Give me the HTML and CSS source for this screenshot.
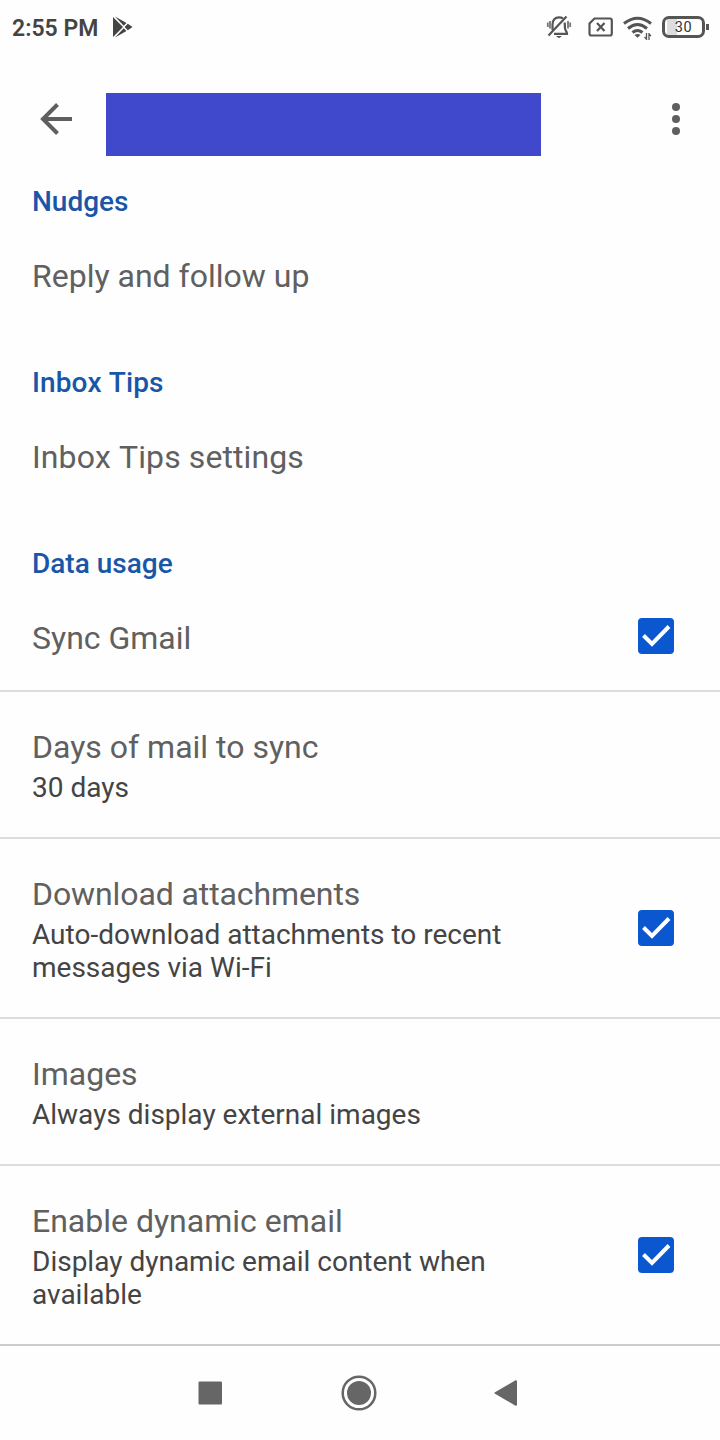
FILE: index.html
```html
<!DOCTYPE html>
<html lang="en">
<head>
    <meta charset="UTF-8">
    <meta name="viewport" content="width=device-width, initial-scale=1.0">
    <title>Settings</title>
    <link rel="stylesheet" href="styles.css">
</head>
<body>
    <div class="status-bar">
        <span class="clock">2:55 PM</span>
        <svg class="play" width="22" height="22" viewBox="0 0 22 22">
            <path d="M1 1L11 11L1 21Z M3 0.5L14.5 7L11.7 9.8Z M3 21.5L14.5 15L11.7 12.2Z M15.8 7.7L20.5 11L15.8 14.3L12.6 11Z" fill="#444"/>
        </svg>
        <div class="status-icons">
            <svg class="bell" width="26" height="26" viewBox="0 0 26 26" fill="none" stroke="#555">
                <path d="M6.500 16V10.500C6.500 6 9 3.300 13 3.300C14.500 3.300 16 3.700 17 4.500M18.500 8.500C19 10 18.800 12 19 14.500C19.200 16.500 21 17.500 21 19.800H8" stroke-width="2.200"/>
                <path d="M2.500 21.500L20.500 2.500" stroke-width="2.200"/>
                <path d="M10 22H16L13 24.200Z" fill="#555" stroke="none"/>
                <path d="M1.800 8.500V13M4 7V14.500M22 7V14.500M24.200 8.500V13" stroke="#777" stroke-width="1.800"/>
            </svg>
            <svg class="sim" width="25" height="20" viewBox="0 0 25 20" fill="none" stroke="#555" stroke-width="2.200">
                <path d="M6.500 1.500H22Q23.800 1.500 23.800 3.500V16.500Q23.800 18.500 22 18.500H3.500Q1.500 18.500 1.500 16.500V6.500Z"/>
                <path d="M9 6L16.500 14M16.500 6L9 14"/>
            </svg>
            <svg class="wifi" width="30" height="24" viewBox="0 0 30 24" fill="none" stroke="#555">
                <path d="M2 7.500Q15.500 -3 29 7.500M6 12.500Q15.500 4.500 25 12.500M10.500 16.500Q15.500 12.500 20.500 16.500" stroke-width="3"/>
                <path d="M12.500 19Q15.500 17 18.500 19L15.500 21.800Z" fill="#555" stroke="none"/>
                <path d="M24.500 17V24M27 17V24M22.500 21L24.500 23M29 20L27 18" stroke-width="1.300"/>
            </svg>
            <div class="battery"><span>30</span></div>
        </div>
    </div>

    <div class="toolbar">
        <svg class="back" width="34" height="32" viewBox="0 0 34 32" fill="none" stroke="#5f5f5f" stroke-width="4">
            <path d="M33 16H4M18.500 1.500L4 16L18.500 30.500"/>
        </svg>
        <div class="account"></div>
        <svg class="more" width="8" height="32" viewBox="0 0 8 32" fill="#5f5f5f">
            <circle cx="4" cy="4" r="4"/>
            <circle cx="4" cy="16" r="4"/>
            <circle cx="4" cy="28" r="4"/>
        </svg>
    </div>

    <div class="settings">
        <h2>Nudges</h2>
        <div class="item single">
            <div class="title">Reply and follow up</div>
        </div>

        <h2 class="tips">Inbox Tips</h2>
        <div class="item single">
            <div class="title tips">Inbox Tips settings</div>
        </div>

        <h2>Data usage</h2>
        <div class="item single line">
            <div class="title">Sync Gmail</div>
            <svg class="check" viewBox="0 0 36 36"><path d="M5.500 17.500L14 26L31 8.500"/></svg>
        </div>
        <div class="item line">
            <div class="text">
                <div class="title">Days of mail to sync</div>
                <div class="summary">30 days</div>
            </div>
        </div>
        <div class="item line">
            <div class="text">
                <div class="title tight">Download attachments</div>
                <div class="summary">Auto-download attachments to recent<br>messages via Wi-Fi</div>
            </div>
            <svg class="check" viewBox="0 0 36 36"><path d="M5.500 17.500L14 26L31 8.500"/></svg>
        </div>
        <div class="item line">
            <div class="text">
                <div class="title">Images</div>
                <div class="summary">Always display external images</div>
            </div>
        </div>
        <div class="item line last">
            <div class="text">
                <div class="title">Enable dynamic email</div>
                <div class="summary">Display dynamic email content when<br>available</div>
            </div>
            <svg class="check" viewBox="0 0 36 36"><path d="M5.500 17.500L14 26L31 8.500"/></svg>
        </div>
    </div>

    <div class="nav-bar">
        <svg width="24" height="24" viewBox="0 0 24 24"><rect x="0.500" y="0.500" width="23.500" height="23" rx="1" fill="#666"/></svg>
        <svg class="home" width="36" height="36" viewBox="0 0 36 36">
            <circle cx="18" cy="18" r="16.300" fill="none" stroke="#666" stroke-width="2.500"/>
            <circle cx="18" cy="18" r="12" fill="#666"/>
        </svg>
        <svg width="24" height="26" viewBox="0 0 24 26">
            <path d="M1.500 13L22 1.200V24.800Z" fill="#666" stroke="#666" stroke-width="2" stroke-linejoin="round"/>
        </svg>
    </div>
</body>
</html>
```
FILE: styles.css
```css
* {
    margin: 0;
    padding: 0;
    box-sizing: border-box;
}
body {
    width: 720px;
    height: 1440px;
    background: #fefefe;
    font-family: Roboto, sans-serif;
    overflow: hidden;
}
svg {
    display: block;
    flex: none;
}
.status-bar {
    display: flex;
    align-items: center;
    height: 54px;
    padding: 0 15px 0 12px;
}
.clock {
    padding-top: 2px;
    font-size: 23px;
    font-weight: 600;
    color: #444;
}
.play {
    margin-left: 14px;
}
.status-icons {
    display: flex;
    align-items: center;
    margin-left: auto;
}
.bell {
    margin-right: 16px;
}
.sim {
    margin-right: 9px;
}
.wifi {
    margin: 1px 10px 0 0;
}
.battery {
    position: relative;
    width: 43px;
    height: 22px;
    border: 3px solid #555;
    border-radius: 7px;
    background: linear-gradient(to right, #fefefe 2px, #ddd 2px, #ddd 12px, #fefefe 12px);
    font-size: 14.5px;
    font-weight: 400;
    letter-spacing: 0.6px;
    line-height: 17px;
    text-align: center;
    color: #333;
}
.battery::after {
    content: "";
    position: absolute;
    right: -7px;
    top: 5px;
    width: 3px;
    height: 6px;
    background: #555;
}
.toolbar {
    display: flex;
    align-items: center;
    height: 131px;
    padding: 0 40px 0 39px;
}
.back {
    margin-bottom: 2px;
}
.account {
    width: 435px;
    height: 63px;
    margin: 10px 0 0 33px;
    background: #4048cc;
}
.more {
    margin: 0 0 2px auto;
}
h2 {
    padding-left: 32px;
    font-size: 28px;
    font-weight: 500;
    line-height: 33px;
    color: #1a56a8;
}
.item {
    display: flex;
    align-items: center;
    justify-content: space-between;
    padding: 0 46px 0 32px;
}
.item.single {
    height: 148px;
    padding-top: 39px;
    align-items: flex-start;
}
.item.single.line {
    height: 112px;
    padding-top: 38px;
}
.item.single.line .title {
    margin-top: 1px;
}
.line {
    border-bottom: 2px solid #dcdcdc;
}
.last {
    border-color: #ccc;
}
.text {
    padding: 36px 0 33px;
}
.title {
    font-size: 32px;
    line-height: 38px;
    color: #606060;
}
.tips {
    font-kerning: none;
    letter-spacing: 0.1px;
}
.tight {
    letter-spacing: -0.1px;
}
.summary {
    margin-top: 5px;
    font-size: 28px;
    line-height: 33px;
    color: #444;
}
.check {
    width: 36px;
    height: 36px;
    border-radius: 4px;
    background: #0b57d0;
    fill: none;
    stroke: #fff;
    stroke-width: 4;
}
.nav-bar {
    display: flex;
    align-items: center;
    justify-content: space-between;
    height: 93px;
    padding: 0 202px 0 198px;
}
.home {
    margin-left: 2px;
}
```
